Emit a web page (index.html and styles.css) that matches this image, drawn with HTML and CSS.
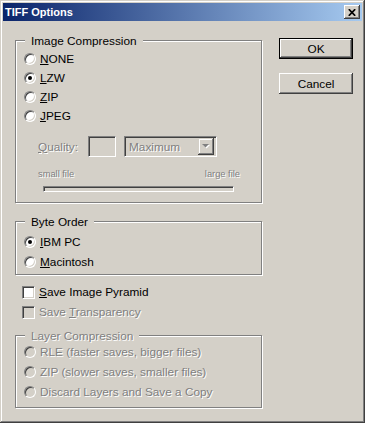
FILE: index.html
```html
<!DOCTYPE html>
<html lang="en">
<head>
    <meta charset="UTF-8">
    <title>TIFF Options</title>
    <link rel="stylesheet" href="styles.css">
</head>
<body>
    <div class="window">
        <!-- Title bar -->
        <div class="titlebar">
            <span class="title">TIFF Options</span>
            <button class="close-btn" aria-label="Close">
                <svg width="8" height="7" viewBox="0 0 8 7">
                    <path d="M0.8 0.2 L7.2 6.8 M7.2 0.2 L0.8 6.8" stroke="#000" stroke-width="1.7" fill="none"/>
                </svg>
            </button>
        </div>

        <div class="content">
            <div class="main">
                <!-- Image Compression -->
                <div class="group group-compression">
                    <div class="group-title">Image Compression</div>
                    <div class="option"><span class="radio"></span><span><u>N</u>ONE</span></div>
                    <div class="option"><span class="radio checked"></span><span><u>L</u>ZW</span></div>
                    <div class="option"><span class="radio"></span><span><u>Z</u>IP</span></div>
                    <div class="option"><span class="radio"></span><span><u>J</u>PEG</span></div>

                    <div class="quality-row">
                        <span class="quality-label disabled"><u>Q</u>uality:</span>
                        <span class="edit-box"></span>
                        <span class="dropdown">
                            <span class="dropdown-text disabled">Maximum</span>
                            <span class="dropdown-btn">
                                <svg width="8" height="5" viewBox="0 0 8 5">
                                    <path d="M1 1 H8 L4.5 4.5 Z" fill="#fff"/>
                                    <path d="M0 0 H7 L3.5 3.5 Z" fill="#808080"/>
                                </svg>
                            </span>
                        </span>
                    </div>
                    <div class="size-labels disabled">
                        <span>small file</span>
                        <span>large file</span>
                    </div>
                    <div class="track"></div>
                </div>

                <!-- Byte Order -->
                <div class="group group-byte">
                    <div class="group-title">Byte Order</div>
                    <div class="option tall"><span class="radio checked"></span><span><u>I</u>BM PC</span></div>
                    <div class="option tall"><span class="radio"></span><span><u>M</u>acintosh</span></div>
                </div>

                <div class="checks">
                    <div class="check-row"><span class="checkbox"></span><span><u>S</u>ave Image Pyramid</span></div>
                    <div class="check-row"><span class="checkbox off"></span><span class="disabled">Save <u>T</u>ransparency</span></div>
                </div>

                <!-- Layer Compression (disabled) -->
                <div class="group group-layer">
                    <div class="group-title disabled">Layer Compression</div>
                    <div class="option tall"><span class="radio off"></span><span class="disabled">RLE (faster saves, bigger files)</span></div>
                    <div class="option tall"><span class="radio off"></span><span class="disabled">ZIP (slower saves, smaller files)</span></div>
                    <div class="option tall"><span class="radio off"></span><span class="disabled">Discard Layers and Save a Copy</span></div>
                </div>
            </div>

            <div class="side">
                <button class="btn default">OK</button>
                <button class="btn">Cancel</button>
            </div>
        </div>
    </div>
</body>
</html>
```

FILE: styles.css
```css
/* Win2000 style dialog */
body {
    margin: 0;
    background-color: #d4d0c8;
    font-family: "Liberation Sans", Arial, sans-serif;
    font-size: 11.8px;
    color: #000;
}
u { text-decoration: underline; text-underline-offset: 1px; }

.window {
    width: 365px;
    height: 423px;
    box-sizing: border-box;
    padding: 3px;
    background-color: #d4d0c8;
    box-shadow: inset -1px -1px #404040, inset 1px 1px #d4d0c8,
                inset -2px -2px #808080, inset 2px 2px #fff;
}

.titlebar {
    height: 18px;
    display: flex;
    align-items: center;
    padding-left: 2px;
    background: linear-gradient(to right, #0a246a, #a6caf0);
}
.title {
    color: #fff;
    font-weight: bold;
    font-size: 11px;
}
.close-btn {
    margin-left: auto;
    margin-right: 2px;
    width: 16px;
    height: 14px;
    padding: 0;
    border: none;
    background-color: #d4d0c8;
    display: flex;
    align-items: center;
    justify-content: center;
    box-shadow: inset -1px -1px #404040, inset 1px 1px #fff,
                inset -2px -2px #808080, inset 2px 2px #d4d0c8;
}
.close-btn svg { display: block; margin-left: -1px; }

.content {
    display: flex;
}
.main {
    width: 247px;
    padding-left: 12px;
    padding-top: 19px;
}
.side {
    margin-left: 17px;
    padding-top: 17px;
    display: flex;
    flex-direction: column;
    gap: 14px;
}

/* buttons */
.btn {
    width: 74px;
    height: 21px;
    padding: 0;
    border: none;
    background-color: #d4d0c8;
    font-family: inherit;
    font-size: 11.8px;
    color: #000;
    box-shadow: inset -1px -1px #404040, inset 1px 1px #fff,
                inset -2px -2px #808080, inset 2px 2px #d4d0c8;
}
.btn.default {
    border: 1px solid #000;
}

/* group boxes */
.group {
    border: 1px solid #808080;
    box-shadow: inset 1px 1px #fff, 1px 1px #fff;
}
.group-title {
    width: fit-content;
    line-height: 14px;
    margin: -7px 0 1px 9px;
    padding: 0 6px;
    background-color: #d4d0c8;
}
.group-compression { padding-bottom: 10px; }
.group-byte { margin-top: 18px; padding-bottom: 2px; }
.group-byte .group-title { margin-bottom: 3px; }
.group-layer { margin-top: 13px; padding-bottom: 5px; }
.group-layer .group-title { margin-bottom: -1px; }

.disabled {
    color: #808080;
    text-shadow: 1px 1px 0 #fff;
}

.option {
    height: 19px;
    display: flex;
    align-items: center;
    padding-left: 8px;
}
.option.tall { height: 20px; }

.radio {
    position: relative;
    width: 12px;
    height: 12px;
    box-sizing: border-box;
    margin-right: 4px;
    border-radius: 50%;
    border: 1px solid;
    border-color: #808080 #fff #fff #808080;
    background-color: #fff;
    box-shadow: inset 1px 1px #404040, inset -1px -1px #d4d0c8;
    transform: rotate(0deg);
}
.radio.off { background-color: #d4d0c8; }
.radio.checked::after {
    content: "";
    position: absolute;
    left: 3px;
    top: 3px;
    width: 4px;
    height: 4px;
    border-radius: 50%;
    background-color: #000;
}

/* quality row */
.quality-row {
    margin-top: 11px;
    display: flex;
    align-items: center;
    padding-left: 22px;
}
.quality-label { width: 50px; }
.edit-box, .dropdown {
    height: 21px;
    box-sizing: border-box;
    border: 1px solid;
    border-color: #808080 #fff #fff #808080;
    box-shadow: inset 1px 1px #404040, inset -1px -1px #d4d0c8;
    background-color: #d4d0c8;
}
.edit-box { width: 28px; }
.dropdown {
    width: 93px;
    margin-left: 8px;
    display: flex;
    align-items: center;
    padding: 2px;
}
.dropdown-text {
    flex-grow: 1;
    padding-left: 2px;
}
.dropdown-btn {
    width: 16px;
    height: 17px;
    display: flex;
    align-items: center;
    justify-content: center;
    background-color: #d4d0c8;
    box-shadow: inset -1px -1px #404040, inset 1px 1px #d4d0c8,
                inset -2px -2px #808080, inset 2px 2px #fff;
}
.dropdown-btn svg { display: block; }

.size-labels {
    margin-top: 11px;
    height: 12px;
    line-height: 12px;
    display: flex;
    justify-content: space-between;
    padding: 0 21px 0 22px;
    font-size: 9.3px;
}
.track {
    margin: 6px 0 0 27px;
    width: 191px;
    height: 6px;
    box-sizing: border-box;
    border: 1px solid;
    border-color: #808080 #fff #fff #808080;
    box-shadow: inset 1px 1px #404040, inset -1px -1px #d4d0c8;
}

/* checkboxes */
.checks {
    margin-top: 7px;
    padding-left: 7px;
}
.check-row {
    height: 20px;
    display: flex;
    align-items: center;
}
.checkbox {
    width: 13px;
    height: 13px;
    box-sizing: border-box;
    margin-right: 4px;
    border: 1px solid;
    border-color: #808080 #fff #fff #808080;
    box-shadow: inset 1px 1px #404040, inset -1px -1px #d4d0c8;
    background-color: #fff;
}
.checkbox.off { background-color: #d4d0c8; }
```
